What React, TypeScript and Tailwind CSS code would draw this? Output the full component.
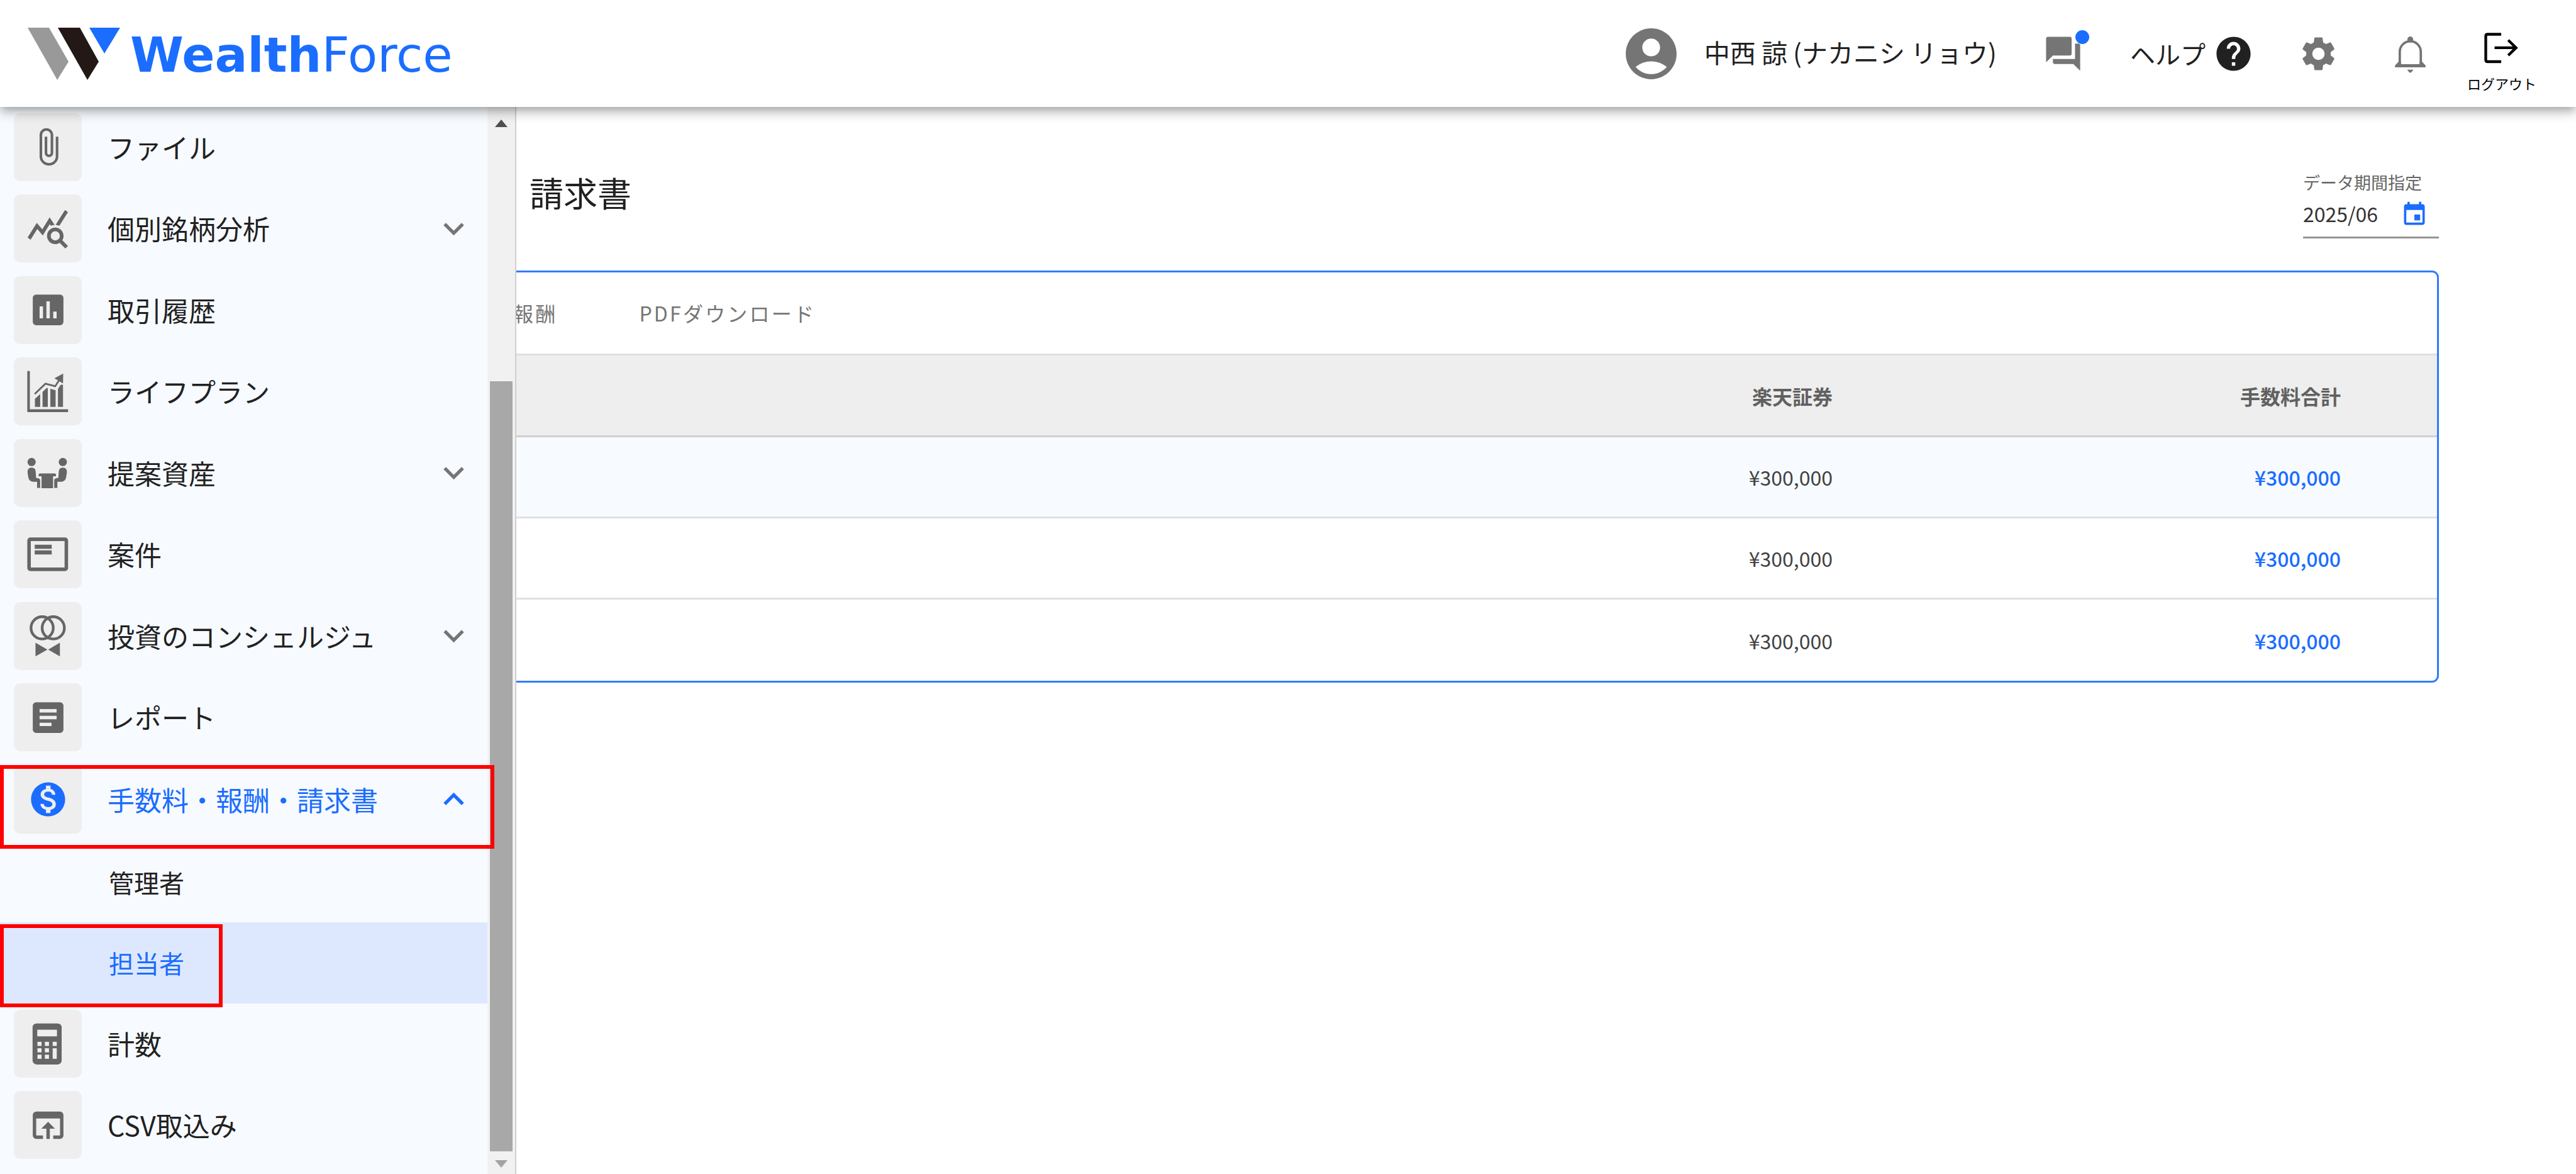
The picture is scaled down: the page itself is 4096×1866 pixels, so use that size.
import { useState } from "react";
import type { ReactNode } from "react";
import clsx from "clsx";
import {
    MdAccountCircle,
    MdArticle,
    MdAttachFile,
    MdEvent,
    MdExpandLess,
    MdExpandMore,
    MdHelp,
    MdMonetizationOn,
    MdOpenInBrowser,
    MdPoll,
    MdQueryStats,
    MdQuestionAnswer,
    MdSettings,
} from "react-icons/md";

type MenuItem = {
    label: string;
    icon: ReactNode;
    expandable?: boolean;
    children?: string[];
};

const Logo = () => (
    <a href="#" className="flex items-center gap-[16px]">
        <svg viewBox="0 0 147 83" className="w-[147px] h-[83px]">
            <path d="M0 0H34L65 54L47 83Z" fill="#999999" />
            <path d="M48 0H83L113 54L95 83Z" fill="#231815" />
            <path d="M98 0H147L122 41Z" fill="#1a6dff" />
        </svg>
        <span className="pt-1 font-['DejaVu_Sans',sans-serif] text-[77px] leading-none text-[#1a6dff]">
            <span className="font-bold">Wealth</span>
            <span>Force</span>
        </span>
    </a>
);

const BellIcon = () => (
    <svg viewBox="0 0 206 206" className="w-[65px] h-[65px]" fill="#757575">
        <circle cx="103" cy="31" r="15" />
        <path
            d="M50 158V93a53 53 0 0 1 106 0V158"
            fill="none"
            stroke="#757575"
            strokeWidth="12"
        />
        <path d="M44 143H162L180 162V171H26V162Z M56 143V155H150V143Z" fillRule="evenodd" />
        <path d="M87 183H119L109 196Q103 201 97 196Z" />
    </svg>
);

const LogoutIcon = () => (
    <svg
        viewBox="0 0 206 180"
        className="w-[64px] h-[56px]"
        fill="none"
        stroke="#000"
        strokeWidth="14"
    >
        <path d="M100 24H30Q21 24 21 33V155Q21 164 30 164H100" />
        <path d="M66 93H178M136 54L176 93L136 132" />
    </svg>
);

/* Icons drawn on the full tile */
const TileSvg = ({ children }: { children: ReactNode }) => (
    <svg viewBox="0 0 348 348" className="w-[108px] h-[108px]" fill="#666">
        {children}
    </svg>
);

const LifePlanIcon = () => (
    <TileSvg>
        <path d="M69 70H82V266H278V280H69Z" />
        <path d="M108 213L135 188V254H108Z" />
        <path d="M147 177L168 157H174V254H147Z" />
        <path d="M187 161L214 168V254H187Z" />
        <path d="M226 162L240 140H252V254H226Z" />
        <path
            d="M107 188L162 135L212 148L236 110"
            fill="none"
            stroke="#666"
            strokeWidth="9"
        />
        <path d="M253 83L208 107L252 134Z" />
    </TileSvg>
);

const ProposalIcon = () => (
    <TileSvg>
        <circle cx="91" cy="117" r="21" />
        <circle cx="251" cy="117" r="21" />
        <path d="M70 168Q70 146 91 146Q112 146 112 168L114 198Q135 200 135 210V250H119V218H98Q78 216 74 196Z" />
        <path d="M272 168Q272 146 251 146Q230 146 230 168L228 198Q207 200 207 210V250H223V218H244Q264 216 268 196Z" />
        <path d="M134 176H209Q216 176 216 183V190H201V251H142V190H127V183Q127 176 134 176Z" />
    </TileSvg>
);

const CaseIcon = () => (
    <TileSvg>
        <rect
            x="78"
            y="97"
            width="191"
            height="154"
            rx="7"
            fill="none"
            stroke="#666"
            strokeWidth="18"
        />
        <rect x="107" y="125" width="87" height="21" />
        <rect x="107" y="154" width="87" height="21" />
    </TileSvg>
);

const ConciergeIcon = () => (
    <TileSvg>
        <g fill="none" stroke="#666" strokeWidth="14">
            <circle cx="145" cy="132" r="57" />
            <circle cx="202" cy="132" r="57" />
        </g>
        <path d="M111 208L172 243L111 278Z" />
        <path d="M236 208L176 243L236 278Z" />
    </TileSvg>
);

const CalculatorIcon = () => (
    <TileSvg>
        <rect x="96" y="70" width="149" height="210" rx="20" />
        <g fill="#eee">
            <rect x="120" y="102" width="101" height="34" />
            <rect x="121" y="164" width="21" height="21" />
            <rect x="159" y="164" width="21" height="21" />
            <rect x="199" y="164" width="21" height="21" />
            <rect x="121" y="197" width="21" height="21" />
            <rect x="159" y="197" width="21" height="21" />
            <rect x="121" y="230" width="21" height="21" />
            <rect x="159" y="230" width="21" height="21" />
            <rect x="199" y="197" width="21" height="54" />
        </g>
    </TileSvg>
);

const menu: MenuItem[] = [
    { label: "ファイル", icon: <MdAttachFile size={65} /> },
    {
        label: "個別銘柄分析",
        icon: <MdQueryStats size={70} />,
        expandable: true,
    },
    { label: "取引履歴", icon: <MdPoll size={65} /> },
    { label: "ライフプラン", icon: <LifePlanIcon /> },
    { label: "提案資産", icon: <ProposalIcon />, expandable: true },
    { label: "案件", icon: <CaseIcon /> },
    {
        label: "投資のコンシェルジュ",
        icon: <ConciergeIcon />,
        expandable: true,
    },
    { label: "レポート", icon: <MdArticle size={65} /> },
    {
        label: "手数料・報酬・請求書",
        icon: <MdMonetizationOn size={65} />,
        expandable: true,
        children: ["管理者", "担当者"],
    },
    { label: "計数", icon: <CalculatorIcon /> },
    { label: "CSV取込み", icon: <MdOpenInBrowser size={65} /> },
];

const rows = [
    { broker: "¥300,000", total: "¥300,000" },
    { broker: "¥300,000", total: "¥300,000" },
    { broker: "¥300,000", total: "¥300,000" },
];

const Header = () => (
    <header className="relative z-20 flex items-center justify-between h-[170px] shrink-0 pl-[44px] pr-[63px] bg-white shadow-[0_5px_11px_-3px_rgba(0,0,0,0.2),0_11px_14px_0_rgba(0,0,0,0.14),0_3px_27px_0_rgba(0,0,0,0.12)]">
        <Logo />
        <div className="flex items-center h-full text-[40px] text-[#212121]">
            <MdAccountCircle size={97} className="text-[#757575]" />
            <span className="ml-[36px] pb-1 text-[41px]">
                中西 諒 (ナカニシ リョウ)
            </span>
            <button
                aria-label="メッセージ"
                className="relative ml-[73px] text-[#757575]"
            >
                <MdQuestionAnswer size={65} />
                <span className="absolute -top-[5px] -right-[9px] w-[22px] h-[22px] rounded-full bg-[#1a6dff]" />
            </button>
            <a href="#" className="flex items-center gap-3 ml-[74px]">
                ヘルプ
                <MdHelp size={65} />
            </a>
            <button aria-label="設定" className="ml-[70px] text-[#757575]">
                <MdSettings size={65} />
            </button>
            <button aria-label="通知" className="ml-[81px]">
                <BellIcon />
            </button>
            <button className="flex flex-col items-center gap-[14px] ml-[58px] pt-[24px] text-[22px] leading-[30px] text-black">
                <LogoutIcon />
                ログアウト
            </button>
        </div>
    </header>
);

const Sidebar = ({
    selected,
    onSelect,
}: {
    selected: string;
    onSelect: (name: string) => void;
}) => (
    <aside className="relative z-10 flex shrink-0 border-r-2 border-[#cfcfcf]">
        <nav className="flex flex-col w-[775px] pb-3 bg-[#f7faff] text-[43px] text-[#212121]">
            {menu.map((item) => (
                <div
                    key={item.label}
                    className={clsx(
                        "flex flex-col",
                        item.children ? "grow-3 basis-0" : "flex-1"
                    )}
                >
                    <button
                        className={clsx(
                            "relative flex flex-1 items-center w-full pl-[22px] pr-[21px] pb-[2px] text-left",
                            item.children && "text-[#1a6dff]"
                        )}
                    >
                        <span
                            className={clsx(
                                "flex items-center justify-center w-[108px] h-[108px] shrink-0 rounded-[10px] bg-[#eee]",
                                !item.children && "text-[#666]"
                            )}
                        >
                            {item.icon}
                        </span>
                        <span className="flex-1 ml-[41px] pb-[2px] whitespace-nowrap leading-[60px]">
                            {item.label}
                        </span>
                        {item.expandable &&
                            (item.children ? (
                                <MdExpandLess size={65} />
                            ) : (
                                <MdExpandMore
                                    size={65}
                                    className="text-[#757575]"
                                />
                            ))}
                        {item.children && (
                            <span className="absolute left-0 top-[10px] w-[786px] h-[133px] border-6 border-[#ff0000]" />
                        )}
                    </button>
                    {item.children?.map((child) => (
                        <button
                            key={child}
                            onClick={() => onSelect(child)}
                            className={clsx(
                                "relative flex flex-1 items-center w-full pl-[173px] text-[40px] text-left",
                                selected === child &&
                                    "bg-[#dde8ff] text-[#1a6dff]"
                            )}
                        >
                            {child}
                            {selected === child && (
                                <span className="absolute left-0 top-[3px] w-[354px] h-[132px] border-6 border-[#ff0000]" />
                            )}
                        </button>
                    ))}
                </div>
            ))}
        </nav>
        {/* Scrollbar */}
        <div className="flex flex-col items-center w-[44px] bg-[#f1f1f1]">
            <svg viewBox="0 0 20 12" className="w-5 h-3 mt-5" fill="#505050">
                <path d="M0 12L10 0L20 12Z" />
            </svg>
            <div className="flex-1" />
            <div className="w-9 h-[72.2%] bg-[#a8a8a8]" />
            <svg
                viewBox="0 0 20 12"
                className="w-5 h-3 mt-[14px] mb-[10px]"
                fill="#a3a3a3"
            >
                <path d="M0 0H20L10 12Z" />
            </svg>
        </div>
    </aside>
);

const FeeTable = () => (
    <table className="w-full border-separate border-spacing-0 text-[32px] text-right text-[#424242]">
        <thead>
            <tr className="h-[130px] bg-[#eee] text-[#616161]">
                <th className="border-b-3 border-[#d0d0d0]" />
                <th className="w-[808px] pr-[153px] border-b-3 border-[#d0d0d0] font-bold">
                    楽天証券
                </th>
                <th className="w-[808px] pr-[153px] border-b-3 border-[#d0d0d0] font-bold">
                    手数料合計
                </th>
            </tr>
        </thead>
        <tbody>
            {rows.map((row, idx) => (
                <tr
                    key={idx}
                    className="h-[129px] first:bg-[#f7fbff] [&:not(:last-child)>td]:border-b-3"
                >
                    <td className="border-[#e0e0e0]" />
                    <td className="pr-[153px] border-[#e0e0e0]">
                        {row.broker}
                    </td>
                    <td className="pr-[153px] border-[#e0e0e0] font-medium text-[#1a6dff]">
                        {row.total}
                    </td>
                </tr>
            ))}
        </tbody>
    </table>
);

export default function App() {
    const [selected, setSelected] = useState("担当者");
    const [period, setPeriod] = useState("2025/06");

    return (
        <div className="flex flex-col min-h-screen bg-white font-['Noto_Sans_CJK_JP',sans-serif]">
            <Header />
            <div className="flex flex-1">
                <Sidebar selected={selected} onSelect={setSelected} />

                <main className="flex-1 min-w-0 overflow-hidden pt-[104px] pr-[218px]">
                    <div className="flex items-start justify-between">
                        <h1 className="ml-[21px] text-[54px] leading-[64px] text-[#212121]">
                            請求書
                        </h1>
                        <div className="w-[216px]">
                            <label
                                htmlFor="period"
                                className="block text-[27px] leading-[32px] text-[#666]"
                            >
                                データ期間指定
                            </label>
                            <div className="flex items-center h-[73px] border-b-3 border-[#949494]">
                                <input
                                    id="period"
                                    value={period}
                                    onChange={(e) => setPeriod(e.target.value)}
                                    className="w-[155px] pb-1 text-[32px] text-[#333] outline-none"
                                />
                                <button
                                    aria-label="カレンダーを開く"
                                    className="text-[#1a6dff]"
                                >
                                    <MdEvent size={44} />
                                </button>
                            </div>
                        </div>
                    </div>

                    <section className="mt-[51px] border-3 border-l-0 border-[#2f7bff] rounded-r-[11px] overflow-hidden">
                        {/* Tabs */}
                        <div className="flex h-[132px] border-b-3 border-[#e0e0e0] text-[32px] tracking-widest text-[#757575]">
                            <button className="-ml-[70px] px-[65px] pb-[2px]">
                                報酬
                            </button>
                            <button className="px-[65px] pb-[2px]">
                                PDFダウンロード
                            </button>
                        </div>
                        <FeeTable />
                    </section>
                </main>
            </div>
        </div>
    );
}
